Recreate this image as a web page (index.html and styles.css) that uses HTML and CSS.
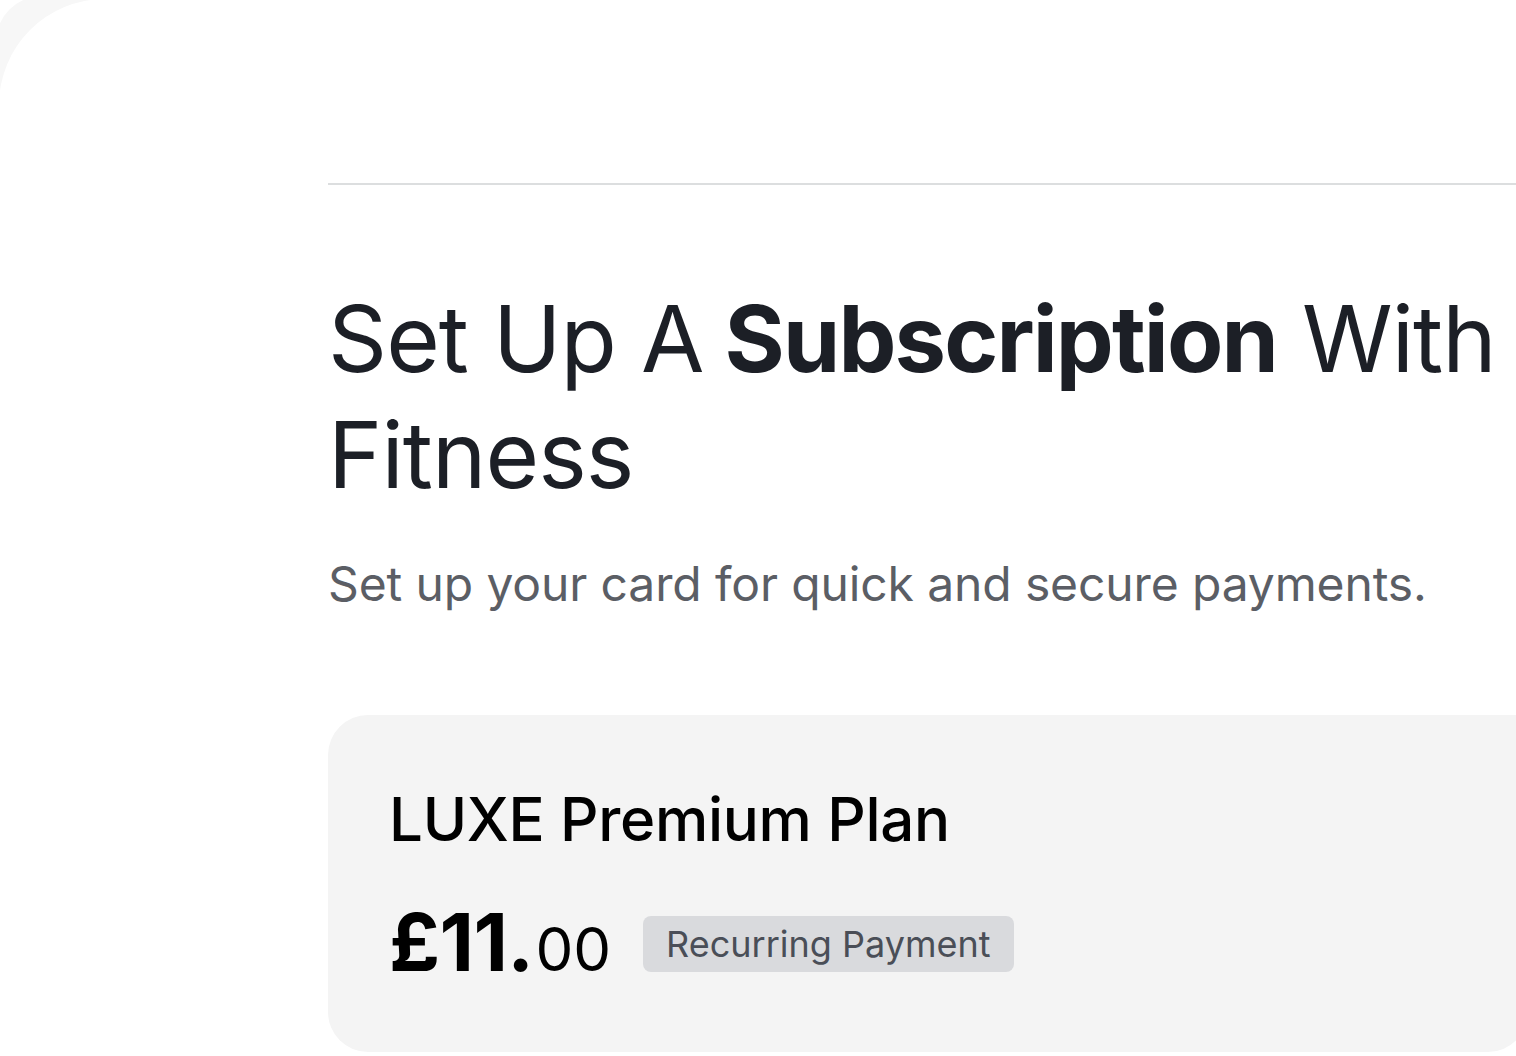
FILE: index.html
```html
<!DOCTYPE html>
<html lang="en">
<head>
<meta charset="utf-8">
<title>Set Up A Subscription</title>
<link rel="stylesheet" href="styles.css">
</head>
<body>
<div class="frame">
  <div class="screen">
    <div class="content">
      <hr class="divider">
      <h1 class="title">Set Up A<span class="tight-space"> </span><strong>Subscription</strong> With Fitness</h1>
      <p class="subtitle">Set up your card for quick and secure payments.</p>
      <section class="plan">
        <h2 class="plan-name">LUXE Premium Plan</h2>
        <div class="price-row">
          <div class="price"><span class="price-main">£11.</span><span class="price-cents">00</span></div>
          <span class="badge">Recurring Payment</span>
        </div>
      </section>
    </div>
  </div>
</div>
</body>
</html>
```

FILE: styles.css
```css
* { box-sizing: border-box; }
html, body {
  margin: 0;
  padding: 0;
  width: 1516px;
  height: 1056px;
  overflow: hidden;
  background: #ffffff;
  font-family: Inter, "Noto Sans", "Liberation Sans", sans-serif;
}
.frame {
  margin: -4px 0 0 -4px;
  background: #f7f7f7;
  border-top-left-radius: 46px;
  padding: 3px 0 0 3px;
  height: 1064px;
}
.screen {
  background: #ffffff;
  border-top-left-radius: 106px;
  height: 100%;
  padding: 184px 0 0 329px;
}
.content {
  width: 1200px;
}
.divider {
  margin: 0;
  border: 0;
  height: 2px;
  background: #dcdedf;
}
.title {
  margin: 96px 0 0 0;
  font-size: 92px;
  line-height: 116px;
  font-weight: 400;
  color: #1c1f26;
  letter-spacing: -0.9px;
}
.title .tight-space {
  letter-spacing: -4.9px;
}
.title strong {
  font-weight: 700;
  letter-spacing: -1.85px;
}
.subtitle {
  margin: 37px 0 0 0;
  font-size: 48px;
  line-height: 67px;
  color: #5b5e65;
  font-weight: 400;
  letter-spacing: -0.12px;
}
.plan {
  margin-top: 98px;
  background: #f4f4f4;
  border-radius: 40px 0 40px 40px;
  height: 337px;
  padding: 64px 0 0 61px;
}
.plan-name {
  margin: 0;
  font-size: 60px;
  line-height: 80px;
  font-weight: 500;
  color: #000000;
  letter-spacing: -0.3px;
}
.price-row {
  margin-top: 35px;
  display: flex;
  align-items: center;
  gap: 32px;
}
.price {
  display: flex;
  align-items: baseline;
  color: #000000;
}
.price-main {
  font-size: 80px;
  font-weight: 700;
  line-height: 96px;
  letter-spacing: -0.6px;
}
.price-cents {
  font-size: 60px;
  font-weight: 400;
  line-height: 96px;
  margin-left: 2px;
}
.badge {
  display: inline-flex;
  align-items: center;
  height: 56px;
  padding: 0 23px 0 23px;
  background: #d9dadd;
  border-radius: 8px;
  font-size: 36px;
  color: #4a4e57;
  margin-top: -4px;
}
```
